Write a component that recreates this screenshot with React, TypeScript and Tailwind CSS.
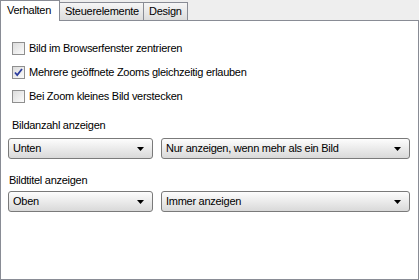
import React from 'react';

const font = { fontFamily: 'Tahoma, "Liberation Sans", "DejaVu Sans", sans-serif' };

function Checkbox({ checked, label }: { checked?: boolean; label: string }) {
  return (
    <div className="flex h-[24px] items-center pl-[11px]">
      <div className="flex h-[13px] w-[13px] items-center justify-center border border-[#8f8f8f] bg-gradient-to-br from-[#dcdcdc] to-[#fbfbfb]">
        {checked && (
          <svg width="9" height="9" viewBox="0 0 9 9">
            <path d="M1 4.5 L3.2 7 L8 1" stroke="#2b3c9e" strokeWidth="1.8" fill="none" />
          </svg>
        )}
      </div>
      <span className="ml-[4px] text-[11px] leading-none tracking-[-0.27px] text-black">{label}</span>
    </div>
  );
}

function Select({ value, width }: { value: string; width: string }) {
  return (
    <div
      className={`flex h-[21px] ${width} items-center justify-between rounded-[3px] border border-[#7a7a7a] bg-gradient-to-b from-[#fdfdfd] to-[#d9d9d9] pl-[4px] pr-[8px]`}
    >
      <span className="text-[11px] leading-none tracking-[-0.27px] text-black">{value}</span>
      <svg width="7" height="4" viewBox="0 0 7 4">
        <path d="M0 0 H7 L3.5 4 Z" fill="#000" />
      </svg>
    </div>
  );
}

export default function App() {
  return (
    <div className="flex h-[280px] w-[419px] flex-col bg-[#eeeeee] tracking-[-0.27px]" style={font}>
      <div className="relative z-10 flex h-[21px] items-start">
        <div className="flex h-[21px] w-[60px] items-start border-l border-r border-t border-[#898c95] bg-white pl-[6px] pt-[4px] text-[11px] leading-none">
          Verhalten
        </div>
        <div className="mt-[2px] flex h-[18px] w-[84px] items-start border-r border-t border-[#898c95] bg-gradient-to-b from-[#f6f6f6] to-[#dcdcdc] pl-[5px] pt-[3px] text-[11px] leading-none">
          Steuerelemente
        </div>
        <div className="mt-[2px] flex h-[18px] w-[44px] items-start border-r border-t border-[#898c95] bg-gradient-to-b from-[#f6f6f6] to-[#dcdcdc] pl-[5px] pt-[3px] text-[11px] leading-none">
          Design
        </div>
      </div>
      <div className="-mt-px flex flex-1 flex-col border border-[#898c95] bg-white">
        <div className="pt-[15px]">
          <Checkbox label="Bild im Browserfenster zentrieren" />
          <Checkbox checked label="Mehrere geöffnete Zooms gleichzeitig erlauben" />
          <Checkbox label="Bei Zoom kleines Bild verstecken" />
        </div>
        <div className="mt-[9px] flex h-[16px] items-center pl-[11px] text-[11px] leading-none">
          Bildanzahl anzeigen
        </div>
        <div className="mt-[5px] flex gap-[8px] pl-[7px]">
          <Select value="Unten" width="w-[145px]" />
          <Select value="Nur anzeigen, wenn mehr als ein Bild" width="w-[249px]" />
        </div>
        <div className="mt-[13px] flex h-[16px] items-center pl-[8px] text-[11px] leading-none">
          Bildtitel anzeigen
        </div>
        <div className="mt-[3px] flex gap-[8px] pl-[7px]">
          <Select value="Oben" width="w-[145px]" />
          <Select value="Immer anzeigen" width="w-[249px]" />
        </div>
      </div>
    </div>
  );
}
